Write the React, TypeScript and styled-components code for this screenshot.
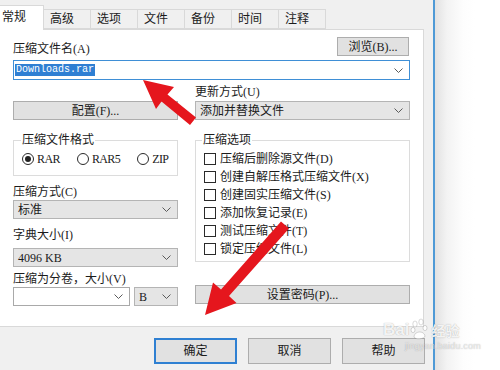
import React from "react";
import styled, { createGlobalStyle } from "styled-components";

const GlobalStyle = createGlobalStyle`
  html, body { margin: 0; padding: 0; background: #fff; }
  body {
    font-family: "Liberation Serif", "Noto Sans CJK SC", serif;
    font-size: 12px;
    color: #1b1b1b;
    overflow: hidden;
  }
  * { box-sizing: border-box; }
`;

const Page = styled.div`
  position: relative;
  width: 500px;
  height: 370px;
  display: flex;
  overflow: hidden;
`;

const Window = styled.div`
  width: 435px;
  height: 370px;
  flex-shrink: 0;
  background: #f0f0f0;
  border-right: 2px solid #4f9ad6;
  display: flex;
  flex-direction: column;
`;

const Outside = styled.div`
  flex: 1;
  background: linear-gradient(to right, #e2e2e2 0px, #f3f3f3 12px, #fdfdfd 28px, #ffffff 40px);
`;

const TabStrip = styled.div`
  height: 29px;
  display: flex;
  align-items: flex-end;
`;

const Tab = styled.div<{ $active?: boolean }>`
  position: relative;
  z-index: ${(p) => (p.$active ? 2 : 1)};
  height: ${(p) => (p.$active ? 25 : 20)}px;
  margin-left: -1px;
  margin-bottom: ${(p) => (p.$active ? -1 : 0)}px;
  padding: ${(p) => (p.$active ? "0 17px 2px 2px" : "0 16px 0 6px")};
  background: ${(p) => (p.$active ? "#ffffff" : "#f0f0f0")};
  border: 1px solid #d9d9d9;
  border-bottom: ${(p) => (p.$active ? "none" : "1px solid #d9d9d9")};
  display: flex;
  align-items: center;
  line-height: 14px;
  white-space: nowrap;
`;

const Panel = styled.div`
  width: 424px;
  height: 298px;
  flex-shrink: 0;
  background: #ffffff;
  border: 1px solid #d9d9d9;
  border-left: none;
  padding: 8px 13px 0 13px;
`;

const NameRow = styled.div`
  height: 18px;
  display: flex;
  justify-content: space-between;
  align-items: flex-end;
`;

const Label = styled.div<{ $mt?: number }>`
  line-height: 14px;
  height: 14px;
  margin-top: ${(p) => p.$mt ?? 0}px;
  white-space: nowrap;
`;

const Button = styled.div<{ $w?: number; $h?: number; $mt?: number }>`
  width: ${(p) => (p.$w ? `${p.$w}px` : "100%")};
  height: ${(p) => p.$h ?? 19}px;
  margin-top: ${(p) => p.$mt ?? 0}px;
  background: #e1e1e1;
  border: 1px solid #adadad;
  display: flex;
  align-items: center;
  justify-content: center;
  line-height: 14px;
  white-space: nowrap;
`;

const BrowseButton = styled(Button)`
  margin-right: 1px;
`;

type ComboKind = "gray" | "white" | "focus";

const Combo = styled.div<{ $kind: ComboKind; $mt?: number; $h?: number; $w?: number }>`
  width: ${(p) => (p.$w ? `${p.$w}px` : "100%")};
  height: ${(p) => p.$h ?? 19}px;
  margin-top: ${(p) => p.$mt ?? 0}px;
  flex-shrink: 0;
  display: flex;
  align-items: center;
  justify-content: space-between;
  padding: 0 6px 0 ${(p) => (p.$kind === "focus" ? 1 : 4)}px;
  background: ${(p) => (p.$kind === "gray" ? "#e5e5e5" : "#ffffff")};
  border: 1px solid
    ${(p) => (p.$kind === "focus" ? "#3f8fd6" : p.$kind === "white" ? "#a9a9a9" : "#b4b4b4")};
  line-height: 14px;
  white-space: nowrap;
`;

const SelectedText = styled.span`
  font-family: "Liberation Mono", monospace;
  font-size: 10px;
  line-height: 11px;
  height: 12px;
  padding: 0 1px;
  background: #2f7fd3;
  color: #ffffff;
`;

const Columns = styled.div`
  display: grid;
  grid-template-columns: 165px 215px;
  column-gap: 17px;
`;

const Column = styled.div<{ $pt: number }>`
  display: flex;
  flex-direction: column;
  padding-top: ${(p) => p.$pt}px;
`;

const Group = styled.fieldset<{ $mt?: number; $pl: number; $pb: number }>`
  margin: ${(p) => p.$mt ?? 0}px 0 0 0;
  padding: 3px 4px ${(p) => p.$pb}px ${(p) => p.$pl}px;
  border: 1px solid #dcdcdc;
  min-width: 0;
`;

const Legend = styled.legend`
  padding: 0 1px;
  line-height: 14px;
  height: 14px;
`;

const RadioRow = styled.div`
  height: 18px;
  display: flex;
  align-items: center;
  gap: 17px;
  padding-left: 1px;
`;

const RadioItem = styled.label`
  display: flex;
  align-items: center;
  gap: 3px;
  line-height: 14px;
`;

const RadioCircle = styled.span<{ $checked?: boolean }>`
  width: 12px;
  height: 12px;
  border-radius: 50%;
  border: 1px solid #2a2a2a;
  background: #fff;
  display: flex;
  align-items: center;
  justify-content: center;
  &::after {
    content: "";
    display: ${(p) => (p.$checked ? "block" : "none")};
    width: 6px;
    height: 6px;
    border-radius: 50%;
    background: #222;
  }
`;

const FormatText = styled.span`
  letter-spacing: -0.6px;
`;

const CheckRow = styled.div`
  height: 18px;
  display: flex;
  align-items: center;
  gap: 4px;
  padding-left: 2px;
  line-height: 14px;
  white-space: nowrap;
`;

const CheckBox = styled.span`
  width: 12px;
  height: 12px;
  border: 1px solid #2a2a2a;
  background: #fff;
  flex-shrink: 0;
`;

const VolumeRow = styled.div`
  display: flex;
  gap: 4px;
  margin-top: 1px;
`;

const Footer = styled.div`
  display: flex;
  justify-content: flex-end;
  gap: 11px;
  padding: 11px 8px 0 0;
`;

const DialogButton = styled.div<{ $default?: boolean }>`
  width: 83px;
  height: 26px;
  background: #e1e1e1;
  border: ${(p) => (p.$default ? "2px solid #2f80d2" : "1px solid #adadad")};
  display: flex;
  align-items: center;
  justify-content: center;
  line-height: 14px;
`;

const Overlay = styled.svg`
  position: absolute;
  left: 0;
  top: 0;
  width: 500px;
  height: 370px;
  pointer-events: none;
`;

const Watermark = styled.div`
  position: absolute;
  left: 383px;
  top: 318px;
  display: flex;
  flex-direction: column;
  align-items: flex-start;
  pointer-events: none;
  color: rgba(255, 255, 255, 0.9);
  text-shadow: 0 0 1px rgba(0, 0, 0, 0.35);
`;

const WmTop = styled.div`
  display: flex;
  align-items: flex-end;
  gap: 1px;
`;

const WmBai = styled.span`
  font-family: "Liberation Sans", sans-serif;
  font-size: 17px;
  font-weight: bold;
  line-height: 20px;
`;

const WmJy = styled.span`
  font-family: "Noto Sans CJK SC", sans-serif;
  font-size: 14px;
  line-height: 20px;
  font-weight: bold;
`;

const WmUrl = styled.span`
  font-family: "Liberation Sans", sans-serif;
  font-size: 9px;
  line-height: 11px;
  margin-top: 1px;
  margin-left: 22px;
  color: rgba(255, 255, 255, 0.7);
  letter-spacing: 0.2px;
`;

const Chevron = () => (
  <svg width="9" height="5" viewBox="0 0 9 5">
    <polyline points="0.5,0.5 4.5,4.5 8.5,0.5" fill="none" stroke="#5a5a5a" strokeWidth="1" />
  </svg>
);

const Paw = () => (
  <svg width="20" height="22" viewBox="0 0 20 22">
    <g fill="rgba(255,255,255,0.9)" stroke="rgba(0,0,0,0.25)" strokeWidth="0.6">
      <ellipse cx="5" cy="6" rx="2.2" ry="3" />
      <ellipse cx="11" cy="4" rx="2.2" ry="3" />
      <ellipse cx="3" cy="12" rx="2" ry="2.6" />
      <ellipse cx="15" cy="10" rx="2" ry="2.6" />
      <path d="M4 19 C4 13 14 12 15 18 C15 21 5 22 4 19 Z" />
    </g>
  </svg>
);

const tabs = ["常规", "高级", "选项", "文件", "备份", "时间", "注释"];
const options = [
  "压缩后删除源文件(D)",
  "创建自解压格式压缩文件(X)",
  "创建固实压缩文件(S)",
  "添加恢复记录(E)",
  "测试压缩文件(T)",
  "锁定压缩文件(L)",
];

export default function App() {
  return (
    <>
      <GlobalStyle />
      <Page>
        <Window>
          <TabStrip>
            {tabs.map((t, i) => (
              <Tab key={t} $active={i === 0}>
                {t}
              </Tab>
            ))}
          </TabStrip>
          <Panel>
            <NameRow>
              <Label>压缩文件名(A)</Label>
              <BrowseButton $w={72}>浏览(B)...</BrowseButton>
            </NameRow>
            <Combo $kind="focus" $mt={4} $h={20}>
              <SelectedText>Downloads.rar</SelectedText>
              <Chevron />
            </Combo>
            <Columns>
              <Column $pt={21}>
                <Button>配置(F)...</Button>
                <Group $mt={13} $pl={7} $pb={7}>
                  <Legend>压缩文件格式</Legend>
                  <RadioRow>
                    <RadioItem>
                      <RadioCircle $checked />
                      <FormatText>RAR</FormatText>
                    </RadioItem>
                    <RadioItem>
                      <RadioCircle />
                      <FormatText>RAR5</FormatText>
                    </RadioItem>
                    <RadioItem>
                      <RadioCircle />
                      <FormatText>ZIP</FormatText>
                    </RadioItem>
                  </RadioRow>
                </Group>
                <Label $mt={9}>压缩方式(C)</Label>
                <Combo $kind="gray" $mt={1}>
                  <span>标准</span>
                  <Chevron />
                </Combo>
                <Label $mt={9}>字典大小(I)</Label>
                <Combo $kind="gray" $mt={6}>
                  <span>4096 KB</span>
                  <Chevron />
                </Combo>
                <Label $mt={5}>压缩为分卷，大小(V)</Label>
                <VolumeRow>
                  <Combo $kind="white" $w={117}>
                    <span />
                    <Chevron />
                  </Combo>
                  <Combo $kind="gray" $w={44}>
                    <span>B</span>
                    <Chevron />
                  </Combo>
                </VolumeRow>
              </Column>
              <Column $pt={5}>
                <Label>更新方式(U)</Label>
                <Combo $kind="gray" $mt={2}>
                  <span>添加并替换文件</span>
                  <Chevron />
                </Combo>
                <Group $mt={13} $pl={6} $pb={3}>
                  <Legend>压缩选项</Legend>
                  {options.map((o) => (
                    <CheckRow key={o}>
                      <CheckBox />
                      <span>{o}</span>
                    </CheckRow>
                  ))}
                </Group>
                <Button $mt={23}>设置密码(P)...</Button>
              </Column>
            </Columns>
          </Panel>
          <Footer>
            <DialogButton $default>确定</DialogButton>
            <DialogButton>取消</DialogButton>
            <DialogButton>帮助</DialogButton>
          </Footer>
        </Window>
        <Outside />
        <Watermark>
          <WmTop>
            <WmBai>Bai</WmBai>
            <Paw />
            <WmJy>经验</WmJy>
          </WmTop>
          <WmUrl>jingyan.baidu.com</WmUrl>
        </Watermark>
        <Overlay viewBox="0 0 500 370">
          <polygon
            fill="#e5161d"
            points="143,80 174,87 167.5,94.5 196,117.5 190,125 161.5,101.5 156,109"
          />
          <polygon
            fill="#e5161d"
            points="205,315 213,282.5 221,289.5 281,221.5 289,228.5 229,296 236.5,303"
          />
        </Overlay>
      </Page>
    </>
  );
}
